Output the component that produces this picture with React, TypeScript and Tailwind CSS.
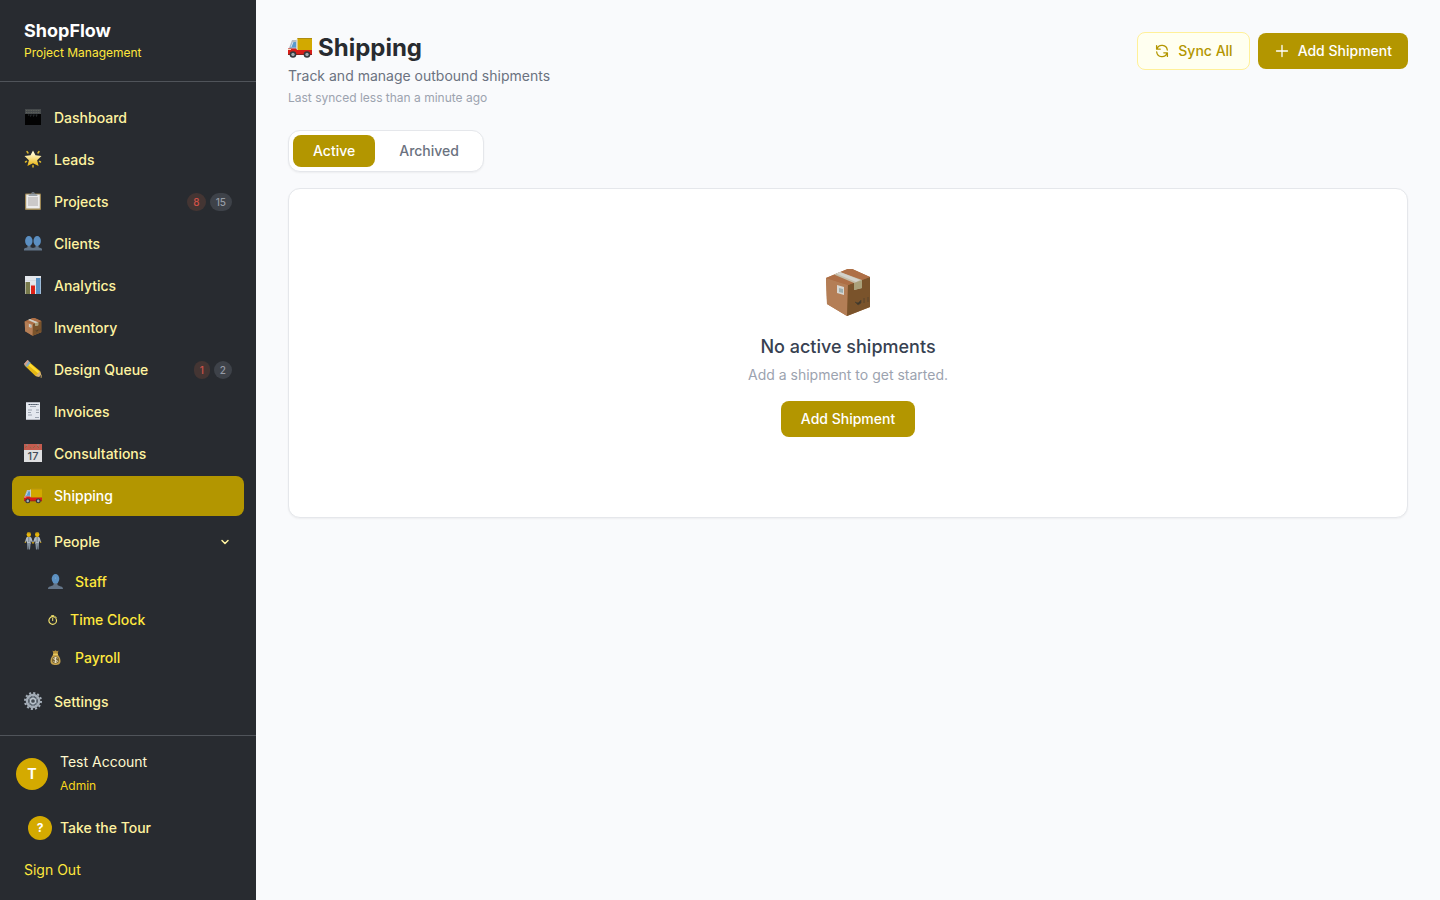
import type { ReactNode } from 'react';

interface IconProps {
    size?: string;
}

function DashboardIcon({ size = 'w-[18px] h-[18px] mb-0.5' }: IconProps) {
    return (
        <svg viewBox="0 0 18 18" className={size} aria-hidden="true">
            <rect x="1" y="1" width="16" height="16" fill="#030303" />
            <rect x="1" y="1" width="16" height="5" fill="#45494b" />
            <path d="M2 2.500h14M2 4.500h14" stroke="#65685f" strokeWidth="0.8" strokeDasharray="1 0.7" />
            <path d="M4 7h10M6 8h1M9 8h1M12 8h1" stroke="#32383c" strokeWidth="1" strokeDasharray="1 0.6" />
        </svg>
    );
}

function StarIcon({ size = 'w-[18px] h-[18px] mb-0.5' }: IconProps) {
    return (
        <svg viewBox="0 0 18 18" className={size} aria-hidden="true">
            <defs>
                <linearGradient id="star" x1="0" y1="0" x2="0" y2="1">
                    <stop offset="0.2" stopColor="#fff9cf" />
                    <stop offset="1" stopColor="#eab308" />
                </linearGradient>
            </defs>
            <path d="M9 0.500l2.500 4.800 6 .7-4.400 4.200 1.500 5.800L9 13.200 3.400 16l1.500-5.800L.5 6l6-.7z" fill="url(#star)" />
            <path d="M3 1.500l1 1.500M15 1.500l-1 1.500M1.500 12l1-.6M16.500 12l-1-.6M9 15.500v1.500" stroke="#d9b52b" strokeWidth="1.500" strokeLinecap="round" />
        </svg>
    );
}

function ClipboardIcon({ size = 'w-[18px] h-[18px] mb-0.5' }: IconProps) {
    return (
        <svg viewBox="0 0 18 18" className={size} aria-hidden="true">
            <rect x="1" y="1.500" width="16" height="16.500" rx="1" fill="#9c8654" />
            <rect x="2.200" y="2.500" width="13.600" height="14" fill="#ececec" />
            <rect x="4" y="5" width="10" height="9" fill="#cbc9c9" />
            <path d="M4.500 4c0-2 2-1.800 3-2.500h3c1 .7 3 .5 3 2.500z" fill="#99a1a8" />
            <rect x="7.500" y="0" width="3" height="2" rx="1" fill="#6d747b" />
        </svg>
    );
}

function ClientsIcon({ size = 'w-[18px] h-[18px] mb-0.5' }: IconProps) {
    return (
        <svg viewBox="0 0 18 18" className={size} aria-hidden="true">
            <path d="M0 16.500V15c0-1 2-1.200 3.500-1.800V10h3v3.200l2.500 .8 2.500-.8V10h3v3.200c1.500.6 3.500.8 3.500 1.800v1.500z" fill="#617488" />
            <ellipse cx="4.800" cy="7" rx="3.700" ry="5" fill="#5b8fc2" />
            <ellipse cx="13.200" cy="7" rx="3.700" ry="5" fill="#5b8fc2" />
        </svg>
    );
}

function ChartIcon({ size = 'w-[18px] h-[18px] mb-0.5' }: IconProps) {
    return (
        <svg viewBox="0 0 18 18" className={size} aria-hidden="true">
            <rect x="1" y="0" width="16" height="18" fill="#e4e7ec" />
            <path d="M1 4.500h16M1 9h16M1 13.500h16" stroke="#ccd3dc" strokeWidth="0.500" />
            <rect x="1.500" y="6" width="4.500" height="12" fill="#77794b" />
            <rect x="7" y="9.500" width="4" height="8.500" fill="#dd2117" />
            <rect x="12" y="2" width="4.500" height="16" fill="#5992c5" />
        </svg>
    );
}

function PackageIcon({ size = 'w-[18px] h-[18px] mb-0.5' }: IconProps) {
    return (
        <svg viewBox="0 1 48 48" className={size} aria-hidden="true">
            <path d="M2 10L26 0l20 9v30L23 48 3 36z" fill="#aa7043" />
            <path d="M2 10L24 17l-1 31L3 36z" fill="#b47e56" />
            <path d="M24 17L46 9v30L23 48z" fill="#7a532b" />
            <path d="M2 10L26 0l20 9-22 8z" fill="#ae6f46" />
            <path d="M10 6.500l6-2.500L38 12v8l-8 2v-7z" fill="#c4bda8" />
            <path d="M12 5.500l4-1.500L36 12l-4 2z" fill="#d3d1ca" />
            <path d="M30 15l8-3v8l-8 2z" fill="#aaa079" />
            <path d="M13 17l7 2v8l-7-2z" fill="#d8d7d2" />
            <path d="M15 20l4 1v4l-4-1z" fill="#9eafb0" />
            <path d="M31 34l3 1 3-3v3l-3 2zM40 30v5M44 29v5" fill="#3e362b" stroke="#51422e" strokeWidth="0.800" />
        </svg>
    );
}

function PencilIcon({ size = 'w-[18px] h-[18px] mb-0.5' }: IconProps) {
    return (
        <svg viewBox="0 0 18 18" className={size} aria-hidden="true">
            <path d="M4 1L16 11l2 6.500-6.500-1.500L.5 5.500z" fill="#e5b714" />
            <path d="M5 2.500L15.800 12l-1.600 1.600L3.500 4.500z" fill="#ffdc2f" />
            <path d="M0 4L3.500 0l3.200 2.700L3 7.200z" fill="#87aabd" />
            <path d="M0 4L3.500 0l1.300 1L1.500 5.400z" fill="#db9d83" />
            <path d="M16 11l2 6.500-6.500-1.500z" fill="#d6b27a" />
            <path d="M16.700 15l1.300 2.500-3-.7z" fill="#55504b" />
        </svg>
    );
}

function ReceiptIcon({ size = 'w-[18px] h-[18px] mb-0.5' }: IconProps) {
    return (
        <svg viewBox="0 0 18 18" className={size} aria-hidden="true">
            <path d="M2 0l1 .5L4 0l1 .5L6 0l1 .5L8 0l1 .5 1-.5 1 .5 1-.5 1 .5 1-.5 1 .5 1-.5v18l-1-.5-1 .5-1-.5-1 .5-1-.5-1 .5-1-.5-1 .5-1-.5-1 .5-1-.5-1 .5-1-.5-1 .5z" fill="#e4e8ef" />
            <path d="M4.500 2.500h10" stroke="#414d5c" strokeWidth="1.200" strokeDasharray="1.500 0.400" />
            <path d="M6 4.500h6M4 8h4M4 10.500h3M4 13h4M12 8h3M12 10.500h3M11 15.500h4" stroke="#929ba7" strokeWidth="0.900" />
        </svg>
    );
}

function CalendarIcon({ size = 'w-[18px] h-[18px] mb-0.5' }: IconProps) {
    return (
        <svg viewBox="0 0 18 18" className={size} aria-hidden="true">
            <rect width="18" height="18" fill="#dedfe1" />
            <rect width="18" height="6" fill="#c45c4f" />
            <path d="M1 3.500L3 2M6 3l1 1.500M9 4l2-2M13 2l2 2" stroke="#806a45" strokeWidth="0.800" />
            <path d="M3 0v2M14 0v2" stroke="#8b8989" />
            <text x="9" y="16" textAnchor="middle" className="font-['Inter',sans-serif] text-[11px] font-medium" fill="#424b57">17</text>
        </svg>
    );
}

function TruckIcon({ size = 'w-[18px] h-[18px]' }: IconProps) {
    return (
        <svg viewBox="0 0 24 24" className={size} aria-hidden="true">
            <path d="M1 12L4 4h5v15H0v-6z" fill="#b7bdc5" />
            <path d="M2 11.500L4.500 6H8v5.500z" fill="#5c9bce" />
            <path d="M5 6l-2 5M9 3v10" stroke="#dbe6ec" strokeWidth="1" />
            <rect x="9.500" y="2" width="14.500" height="12" rx="0.500" fill="#d2a900" />
            <path d="M9.500 2.500h14.500" stroke="#ae8c11" />
            <path d="M0 12.500h8l1 1.500h15v4.500H0z" fill="#d91e18" />
            <path d="M0 13.500h3" stroke="#f8d4b8" />
            <path d="M0 18.500h24" stroke="#8c211c" />
            <circle cx="5" cy="18.500" r="3.300" fill="#34383c" />
            <circle cx="5" cy="18.500" r="1.700" fill="#a3a9ae" />
            <circle cx="19" cy="18.500" r="3.300" fill="#34383c" />
            <circle cx="19" cy="18.500" r="1.700" fill="#a3a9ae" />
        </svg>
    );
}

function PeopleIcon({ size = 'w-[18px] h-[18px] mb-0.5' }: IconProps) {
    return (
        <svg viewBox="0 0 18 18" className={size} aria-hidden="true">
            <path d="M3 5h3.500l1 .8L8.800 10l-.8.6L6.700 8.500V12H3V8.500L2 10.500l-1-.5L2.200 5.800z" fill="#b0bac3" />
            <path d="M11.500 5H15l.8.8L17 10l-1 .5-1-2V12h-3.700V8.500L10 10.600l-.8-.6 1.300-4.200z" fill="#b0bac3" />
            <path d="M3 11h3.700L6 17.500H5L4.900 13l-.5 4.500h-1zM11.300 11H15l-.4 6.500h-1L13.100 13l-.1 4.500h-1z" fill="#82909d" />
            <path d="M4.800 5v5M13.200 5v5" stroke="#65727f" strokeWidth="0.800" />
            <ellipse cx="4.800" cy="2.600" rx="2.200" ry="2.500" fill="#e8b60b" />
            <ellipse cx="13.200" cy="2.600" rx="2.200" ry="2.500" fill="#e8b60b" />
            <path d="M3.200 .8h3.200M11.600 .8h3.200" stroke="#8a711c" strokeWidth="0.800" />
            <path d="M1.500 9.800l-.5 1M8 10.500l1 .6 1-.6M16.500 9.800l.5 1" stroke="#d2a514" strokeWidth="1.200" fill="none" />
        </svg>
    );
}

function PersonIcon({ size = 'w-[15px] h-[15px] mb-0.5' }: IconProps) {
    return (
        <svg viewBox="0 0 15 15" className={size} aria-hidden="true">
            <path d="M0 15c0-3 3.500-2.500 5.500-4V8h4v3c2 1.500 5.500 1 5.500 4z" fill="#647588" />
            <ellipse cx="7.500" cy="4.800" rx="3.800" ry="4.800" fill="#5d91c1" />
            <circle cx="7.500" cy="4" r="0.500" fill="#8fb5d5" />
        </svg>
    );
}

function StopwatchIcon({ size = 'w-[10px] h-[10px]' }: IconProps) {
    return (
        <svg viewBox="0 0 10 10" className={size} fill="none" stroke="#f2e16c" aria-hidden="true">
            <circle cx="4.700" cy="5.500" r="3.800" strokeWidth="1.200" />
            <path d="M4.700 3v3M3.200 0.700h3M4.700 .7v1.500M7.500 1.500l1 1" />
        </svg>
    );
}

function MoneyIcon({ size = 'w-[15px] h-[15px] mb-0.5' }: IconProps) {
    return (
        <svg viewBox="0 0 15 15" className={size} aria-hidden="true">
            <path d="M4.500 0.500l1.500.8L7.500.2 9 1.300l1.500-.8L9.500 4h-4z" fill="#b5903b" />
            <path d="M5.500 4h4c1 2 3 3.500 3 7 0 3-2 4-5 4s-5-1-5-4c0-3.500 2-5 3-7z" fill="#c5a24d" />
            <path d="M5 4.200h5" stroke="#f1d15f" strokeWidth="1.200" />
            <circle cx="7.500" cy="10" r="3.500" fill="#77622f" />
            <path d="M9.500 8.200c-.8-.8-3.800-.8-3.800.6 0 1.500 3.800.9 3.800 2.400 0 1.400-3 1.300-4 .4M7.500 7v6" fill="none" stroke="#eee6ce" strokeWidth="0.900" />
        </svg>
    );
}

function GearIcon({ size = 'w-[18px] h-[18px] mb-0.5' }: IconProps) {
    return (
        <svg viewBox="0 0 18 18" className={size} fill="none" aria-hidden="true">
            <circle cx="9" cy="9" r="8" stroke="#a7b0ba" strokeWidth="2" strokeDasharray="2.100 2.089" />
            <circle cx="9" cy="9" r="6" stroke="#a4adb7" strokeWidth="2.500" />
            <circle cx="9" cy="9" r="4.500" fill="#606b76" />
            <path d="M9 9V4M9 9l4.300-2.500M9 9l4.300 2.500M9 9v5M9 9l-4.300 2.500M9 9L4.700 6.500" stroke="#909ba7" />
            <circle cx="9" cy="9" r="2.500" stroke="#bcc5ce" strokeWidth="1.300" fill="#414850" />
        </svg>
    );
}

interface NavItem {
    label: string;
    icon: ReactNode;
    alerts?: number;
    total?: number;
    active?: boolean;
}

const navItems: NavItem[] = [
    { label: 'Dashboard', icon: <DashboardIcon /> },
    { label: 'Leads', icon: <StarIcon /> },
    { label: 'Projects', icon: <ClipboardIcon />, alerts: 8, total: 15 },
    { label: 'Clients', icon: <ClientsIcon /> },
    { label: 'Analytics', icon: <ChartIcon /> },
    { label: 'Inventory', icon: <PackageIcon /> },
    { label: 'Design Queue', icon: <PencilIcon />, alerts: 1, total: 2 },
    { label: 'Invoices', icon: <ReceiptIcon /> },
    { label: 'Consultations', icon: <CalendarIcon /> },
    { label: 'Shipping', icon: <TruckIcon />, active: true },
];

const peopleItems: NavItem[] = [
    { label: 'Staff', icon: <PersonIcon /> },
    { label: 'Time Clock', icon: <StopwatchIcon /> },
    { label: 'Payroll', icon: <MoneyIcon /> },
];

function NavLink({ item }: { item: NavItem }) {
    return (
        <a
            href="#"
            aria-current={item.active ? 'page' : undefined}
            className={`flex h-10 items-center gap-3 rounded-lg px-3 text-sm font-medium ${item.active
                ? 'bg-[#b39600] text-white'
                : 'text-[#fff3a0]'
                }`}
        >
            {item.icon}
            <span className="flex-1">{item.label}</span>
            {item.total && (
                <span className="flex gap-1 text-[10px] leading-[18px] font-medium">
                    <span className="rounded-full bg-[#443533] px-[6px] text-[#cf5148]">{item.alerts}</span>
                    <span className="rounded-full bg-[#3e4249] px-[6px] text-[#969ca6]">{item.total}</span>
                </span>
            )}
        </a>
    );
}

function Sidebar() {
    return (
        <aside className="flex w-64 shrink-0 flex-col bg-[#282b30]">
            <div className="border-b border-[#50545a] px-6 py-5">
                <div className="text-lg leading-[21px] font-bold text-white">ShopFlow</div>
                <p className="mt-1 text-xs text-[#ffe83d]">Project Management</p>
            </div>
            <nav className="flex flex-1 flex-col gap-0.5 px-3 pt-4 pb-3">
                {navItems.map((item) => (
                    <NavLink key={item.label} item={item} />
                ))}
                <div className="my-1 flex flex-col gap-0.5">
                    <button type="button" aria-expanded="true" className="flex h-10 items-center gap-3 rounded-lg px-3 text-sm font-medium text-[#fff3a0]">
                        <PeopleIcon />
                        <span className="flex-1 text-left">People</span>
                        <svg viewBox="0 0 14 14" className="h-[14px] w-[14px]" fill="none" stroke="currentColor" strokeWidth="1.500" strokeLinecap="round" strokeLinejoin="round" aria-hidden="true">
                            <path d="M4 5.500l3 3 3-3" />
                        </svg>
                    </button>
                    {peopleItems.map((item) => (
                        <a key={item.label} href="#" className="flex h-9 items-center gap-3 pr-3 pl-9 text-sm font-medium text-[#ffe83d]">
                            {item.icon}
                            {item.label}
                        </a>
                    ))}
                </div>
                <NavLink item={{ label: 'Settings', icon: <GearIcon /> }} />
            </nav>
            <div className="border-t border-[#50545a] p-4">
                <div className="flex items-center gap-3">
                    <div className="flex h-8 w-8 items-center justify-center rounded-full bg-[#d4aa00] text-sm font-bold text-white">T</div>
                    <div className="flex flex-col gap-1">
                        <span className="text-sm leading-5 text-[#fff9cf]">Test Account</span>
                        <span className="text-xs leading-5 text-[#f9d71c]">Admin</span>
                    </div>
                </div>
                <button type="button" className="mt-3 flex h-10 w-full items-center gap-2 px-3 text-sm font-medium text-[#fff3a0]">
                    <span className="flex h-6 w-6 items-center justify-center rounded-full bg-[#d4aa00] text-xs font-bold text-white">?</span>
                    Take the Tour
                </button>
                <button type="button" className="mt-2 block h-7 px-2 text-sm text-[#ffe83d]">Sign Out</button>
            </div>
        </aside>
    );
}

export default function App() {
    return (
        <div className="flex min-h-screen bg-[#f9fafc] font-['Inter',sans-serif]">
            <Sidebar />
            <main className="flex-1 p-8">
                <header className="flex items-start justify-between">
                    <div>
                        <h1 className="flex items-center gap-1.5 text-2xl font-bold text-[#282b30]">
                            <TruckIcon size="w-6 h-6" />
                            Shipping
                        </h1>
                        <p className="mt-0.5 text-sm text-[#6b7280]">Track and manage outbound shipments</p>
                        <p className="mt-1 text-xs text-[#9ca3af]">Last synced less than a minute ago</p>
                    </div>
                    <div className="flex items-center gap-2 text-sm font-medium">
                        <button type="button" className="flex h-[38px] items-center gap-2 rounded-lg border border-[#fff099] bg-[#fffff0] px-4 text-[#b39600]">
                            <svg viewBox="0 0 16 16" className="h-4 w-4" fill="none" stroke="currentColor" strokeWidth="1.300" strokeLinecap="round" strokeLinejoin="round" aria-hidden="true">
                                <path d="M2.600 2.600v3.600h3.600M3 6a5.300 5.300 0 0 1 10.300 1M13.400 13.400V9.800H9.800M13 10a5.300 5.300 0 0 1-10.300-1" />
                            </svg>
                            Sync All
                        </button>
                        <button type="button" className="flex h-9 items-center gap-2 rounded-lg bg-[#b39600] px-4 text-white">
                            <svg viewBox="0 0 16 16" className="h-4 w-4" fill="none" stroke="currentColor" strokeWidth="1.300" strokeLinecap="round" aria-hidden="true">
                                <path d="M8 2.500v11M2.500 8h11" />
                            </svg>
                            Add Shipment
                        </button>
                    </div>
                </header>
                <div role="tablist" className="mt-6 flex w-fit rounded-xl border border-[#e5e7eb] bg-white p-1 text-sm font-medium shadow-xs">
                    <button type="button" role="tab" aria-selected="true" className="h-8 rounded-lg bg-[#b39600] px-5 text-white">Active</button>
                    <button type="button" role="tab" aria-selected="false" className="ml-1 h-8 rounded-lg px-5 text-[#6b7280]">Archived</button>
                </div>
                <section className="mt-4 flex flex-col items-center rounded-xl border border-[#e5e7eb] bg-white py-20 shadow-xs">
                    <PackageIcon size="w-12 h-12" />
                    <h2 className="mt-4 text-lg font-medium text-[#374151]">No active shipments</h2>
                    <p className="mt-1 text-sm text-[#9ca3af]">Add a shipment to get started.</p>
                    <button type="button" className="mt-4 h-9 rounded-lg bg-[#b39600] px-5 text-sm font-medium text-white">Add Shipment</button>
                </section>
            </main>
        </div>
    );
}
